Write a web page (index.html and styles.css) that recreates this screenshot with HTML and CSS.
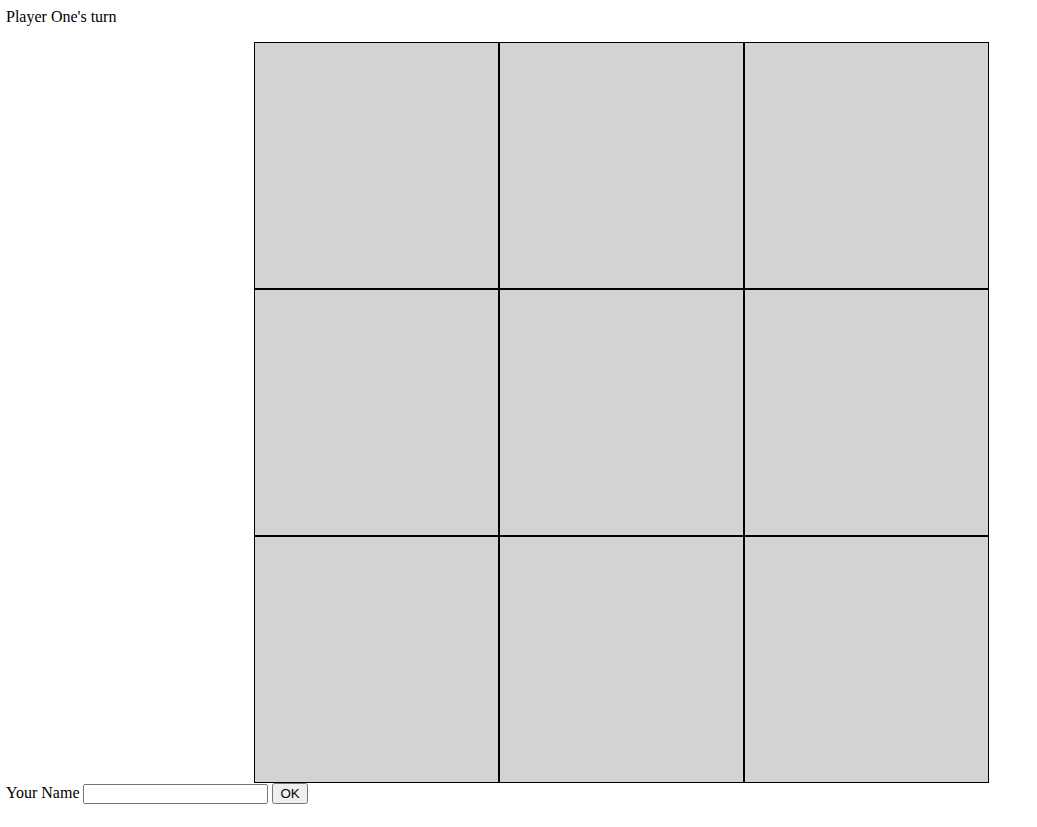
FILE: index.html
```html
<!DOCTYPE html>
<html lang="en">
<head>
    <meta charset="UTF-8">
    <title>Tic Tac Toe</title>
    <link rel="stylesheet" href="styles.css">
</head>
<body>
    <div class="status">Player One's turn</div>

    <div class="board">
        <div class="cell"></div>
        <div class="cell"></div>
        <div class="cell"></div>
        <div class="cell"></div>
        <div class="cell"></div>
        <div class="cell"></div>
        <div class="cell"></div>
        <div class="cell"></div>
        <div class="cell"></div>
    </div>

    <div class="name-form">
        <label for="name-input">Your Name</label>
        <input type="text" id="name-input">
        <button>OK</button>
    </div>
</body>
</html>
```

FILE: styles.css
```css
body {
    font-family: "Liberation Serif", "Times New Roman", serif;
    font-size: 16px;
    margin: 8px 6px;
    color: #000;
}

.status {
    height: 18px;
}

.board {
    display: grid;
    grid-template-columns: repeat(3, 245px);
    grid-template-rows: repeat(3, 247px);
    margin: 16px 0 0 248px;
    width: 735px;
}

.cell {
    background-color: lightgray;
    border: 1px solid black;
}

.name-form input {
    width: 177px;
    height: 14px;
    font-family: "Liberation Sans", Arial, sans-serif;
}

.name-form button {
    font-family: "Liberation Sans", Arial, sans-serif;
    font-size: 13.33px;
}
```
